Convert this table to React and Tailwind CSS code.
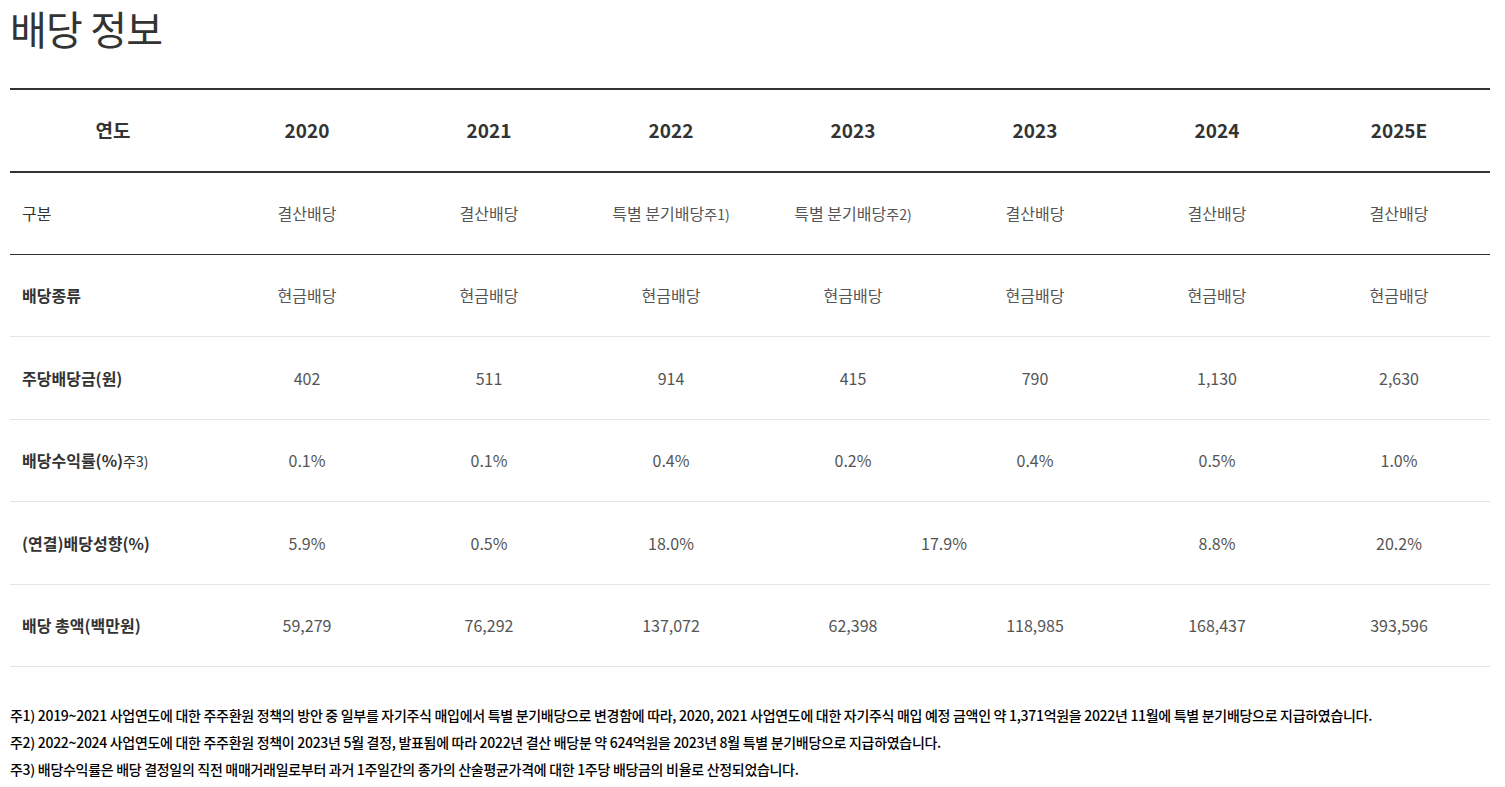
const years = ["2020", "2021", "2022", "2023", "2023", "2024", "2025E"];

const rows = [
    { label: "배당종류", cells: ["현금배당", "현금배당", "현금배당", "현금배당", "현금배당", "현금배당", "현금배당"] },
    { label: "주당배당금(원)", cells: ["402", "511", "914", "415", "790", "1,130", "2,630"] },
    { label: "배당수익률(%)", note: "주3)", cells: ["0.1%", "0.1%", "0.4%", "0.2%", "0.4%", "0.5%", "1.0%"] },
    { label: "(연결)배당성향(%)", cells: ["5.9%", "0.5%", "18.0%", { v: "17.9%", span: 2 }, "8.8%", "20.2%"] },
    { label: "배당 총액(백만원)", cells: ["59,279", "76,292", "137,072", "62,398", "118,985", "168,437", "393,596"] },
];

const kinds = [
    "결산배당",
    "결산배당",
    { t: "특별 분기배당", n: "주1)" },
    { t: "특별 분기배당", n: "주2)" },
    "결산배당",
    "결산배당",
    "결산배당",
];

const notes = [
    ["주1)", "2019~2021 사업연도에 대한 주주환원 정책의 방안 중 일부를 자기주식 매입에서 특별 분기배당으로 변경함에 따라, 2020, 2021 사업연도에 대한 자기주식 매입 예정 금액인 약 1,371억원을 2022년 11월에 특별 분기배당으로 지급하였습니다."],
    ["주2)", "2022~2024 사업연도에 대한 주주환원 정책이 2023년 5월 결정, 발표됨에 따라 2022년 결산 배당분 약 624억원을 2023년 8월 특별 분기배당으로 지급하였습니다."],
    ["주3)", "배당수익률은 배당 결정일의 직전 매매거래일로부터 과거 1주일간의 종가의 산술평균가격에 대한 1주당 배당금의 비율로 산정되었습니다."],
];

const App = () => {
    return (
        <div className="bg-white pl-[10px] pr-[15px] font-['Noto_Sans_CJK_KR',sans-serif] text-[#333]">
            <h1 className="pt-[2px] text-[40px] leading-[52px] font-normal tracking-[-0.8px]">배당 정보</h1>

            <table className="mt-[34px] w-full table-fixed border-collapse">
                <colgroup>
                    <col className="w-[206px]" />
                    {years.map((y, i) => (
                        <col key={i} />
                    ))}
                </colgroup>
                <thead>
                    <tr className="h-[83px] border-y-2 border-[#333]">
                        <th className="text-[19px] font-bold">연도</th>
                        {years.map((y, i) => (
                            <th key={i} className="text-[19px] font-bold">
                                {y}
                            </th>
                        ))}
                    </tr>
                </thead>
                <tbody>
                    <tr className="h-[82px] border-b border-[#333]">
                        <td className="pl-[12px] text-[16px] text-[#333]">구분</td>
                        {kinds.map((k, i) => (
                            <td key={i} className="text-center text-[16px] text-[#555]">
                                {typeof k === "string" ? (
                                    k
                                ) : (
                                    <>
                                        {k.t}
                                        <span className="text-[14px]">{k.n}</span>
                                    </>
                                )}
                            </td>
                        ))}
                    </tr>
                    {rows.map((row) => (
                        <tr key={row.label} className="h-[82.5px] border-b border-[#e5e5e5]">
                            <td className="pl-[12px] text-[16px] font-bold text-[#333]">
                                {row.label}
                                {row.note && <span className="text-[14px] font-normal">{row.note}</span>}
                            </td>
                            {row.cells.map((c, i) =>
                                typeof c === "string" ? (
                                    <td key={i} className="text-center text-[16px] text-[#555]">
                                        {c}
                                    </td>
                                ) : (
                                    <td key={i} colSpan={c.span} className="text-center text-[16px] text-[#555]">
                                        {c.v}
                                    </td>
                                )
                            )}
                        </tr>
                    ))}
                </tbody>
            </table>

            <div className="mt-[38px] flex flex-col gap-[7px] text-[14px] leading-[20px] font-medium tracking-[-0.3px] text-black">
                {notes.map(([n, t]) => (
                    <p key={n}>
                        {n} {t}
                    </p>
                ))}
            </div>
        </div>
    );
};

export default App;
